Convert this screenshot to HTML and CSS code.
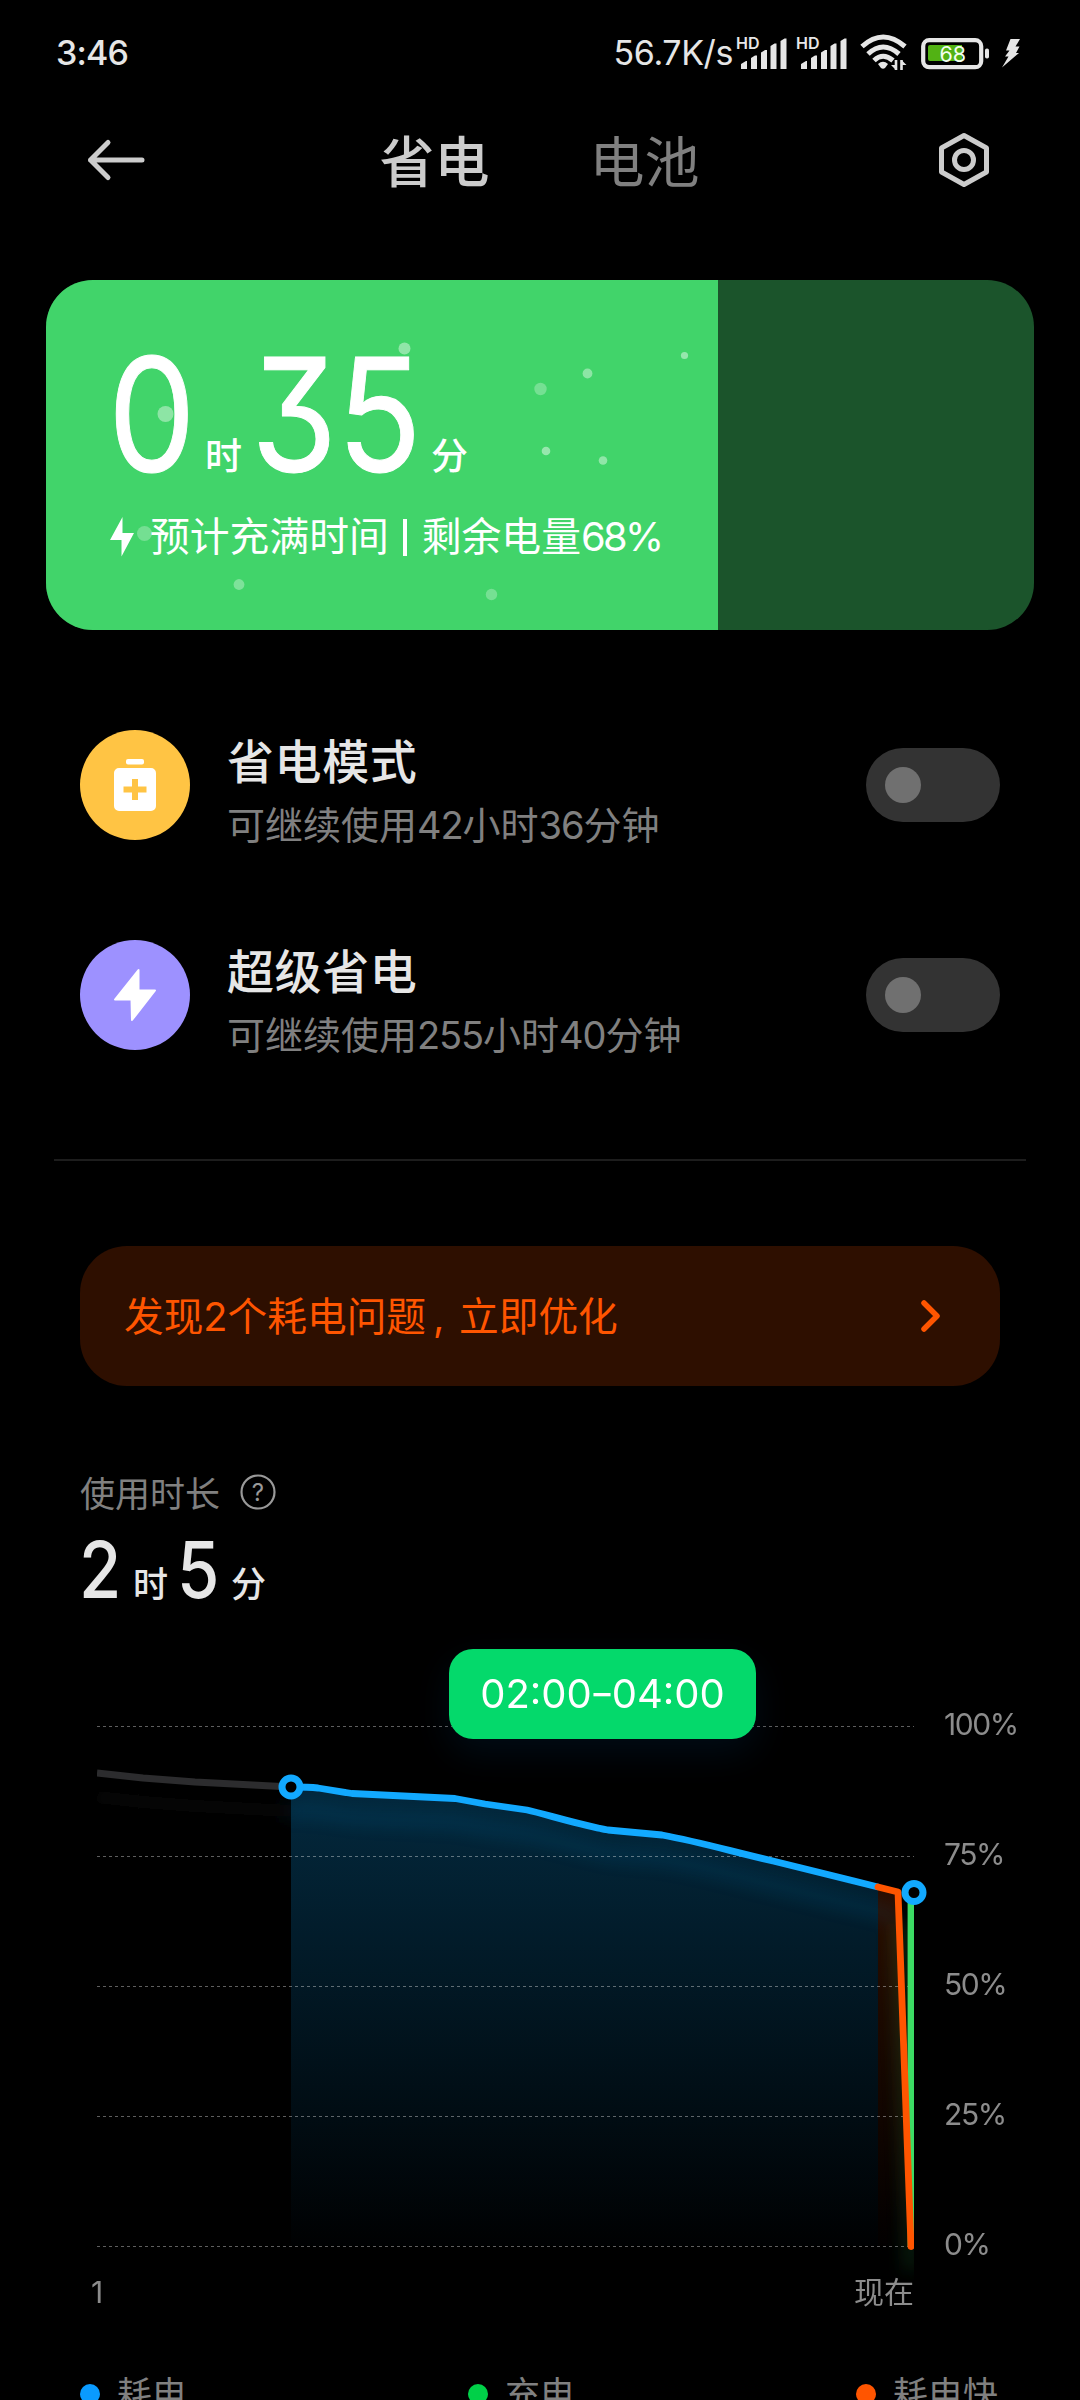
FILE: index.html
```html
<!DOCTYPE html>
<html lang="zh-CN">
<head>
<meta charset="utf-8">
<title>省电与电池</title>
<link rel="stylesheet" href="styles.css">
</head>
<body>
<div class="screen">
  <div class="status">
    <span class="clock">3:46</span>
    <div class="status-right">
      <span class="speed">56.7K/s</span>
      <svg class="signal" width="52" height="34" viewBox="0 0 52 34"><text class="hd" x="-1" y="13">HD</text><path d="M4 33v-5l5-3h1v8zM14 33V22l4-2.500h2V33zM24 33V16.500l4-2.500h2V33zM33.500 33v-23l4-2.500h2V33zM43.500 33V5l4-2.500h2V33z"/></svg>
      <svg class="signal" width="52" height="34" viewBox="0 0 52 34"><text class="hd" x="-1" y="13">HD</text><path d="M4 33v-5l5-3h1v8zM14 33V22l4-2.500h2V33zM24 33V16.500l4-2.500h2V33zM33.500 33v-23l4-2.500h2V33zM43.500 33V5l4-2.500h2V33z"/></svg>
      <svg class="wifi" width="48" height="38" viewBox="0 0 48 38"><g fill="none" stroke="#e6e6e6" stroke-width="5"><path d="M2 12.500Q23-6.500 45 12.500"/><path d="M8 20Q23 6 39 20"/><path d="M14 26.500Q23 18 33 26.500"/></g><path fill="#e6e6e6" d="M18 30q5-4.500 10 0l-3 4q-2 1.500-4 0z"/><path d="M36 26v10M41.500 26v10" stroke="#e6e6e6" stroke-width="2.600"/><path fill="#e6e6e6" d="M31 31h5v5zM46.500 31h-5v-5z"/></svg>
      <svg class="battery" width="70" height="32" viewBox="0 0 70 32"><rect x="2.200" y="3.200" width="58" height="27" rx="6" fill="none" stroke="#e6e6e6" stroke-width="4.200"/><path d="M9 8h32v16H9a2 2 0 0 1-2-2V10a2 2 0 0 1 2-2z" fill="#52b214"/><rect x="64" y="11.500" width="4" height="10" rx="1.800" fill="#e6e6e6"/><text x="18.500" y="24.500">68</text></svg>
      <svg class="charge" width="20" height="30" viewBox="0 0 20 30"><path fill="#e6e6e6" d="M8.500 1H18l-4.500 7.500h4l-3.500 6.500h3L0 29.500l6.500-11H3l4.500-6H4z"/></svg>
    </div>
  </div>

  <div class="header">
    <svg width="60" height="44" viewBox="0 0 60 44"><path d="M22 4.500L4.500 22 22 39.500M4.500 22H56" fill="none" stroke="#ccc" stroke-width="5" stroke-linecap="round" stroke-linejoin="round"/></svg>
    <div class="tabs"><span class="tab active">省电</span><span class="tab">电池</span></div>
    <svg width="52" height="56" viewBox="0 0 52 56"><path d="M26 3.500L48.500 16v24L26 52.500 3.500 40V16z" fill="none" stroke="#ccc" stroke-width="5" stroke-linejoin="round"/><circle cx="26" cy="28" r="9.500" fill="none" stroke="#ccc" stroke-width="5"/></svg>
  </div>

  <div class="card">
    <div class="level"></div>
    <svg class="bubbles" width="988" height="350" viewBox="46 280 988 350" fill="#fff">
      <circle cx="404.500" cy="348.500" r="6" opacity=".42"/><circle cx="165.500" cy="414" r="8" opacity=".4"/><circle cx="540.500" cy="389" r="6.200" opacity=".28"/><circle cx="587.500" cy="373.500" r="4.900" opacity=".4"/><circle cx="684.500" cy="355.500" r="3.600" opacity=".45"/><circle cx="546" cy="451" r="4.300" opacity=".45"/><circle cx="603" cy="460.500" r="4.300" opacity=".42"/><circle cx="144.500" cy="533.500" r="7.500" opacity=".27"/><circle cx="239" cy="584.500" r="5.400" opacity=".32"/><circle cx="491.500" cy="594.500" r="5.700" opacity=".28"/>
    </svg>
    <div class="big-time"><span class="num n1"><b>0</b></span><span class="unit">时</span><span class="num n2"><b>35</b></span><span class="unit">分</span></div>
    <div class="estimate">
      <svg width="24" height="40" viewBox="0 0 24 40"><path fill="#fff" d="M12.500 0v16H24L11.500 39.500V23H0z"/></svg>
      <span class="est-text">预计充满时间</span><i class="bar"></i><span class="est-text">剩余电量<span class="pct">68%</span></span>
    </div>
  </div>

  <div class="modes">
    <div class="mode">
      <div class="badge amber"><svg width="42" height="52" viewBox="0 0 42 52"><rect x="12" y="0" width="18" height="5.500" rx="2" fill="#fff"/><path fill="#fff" fill-rule="evenodd" d="M5 9h32a5 5 0 0 1 5 5v33a5 5 0 0 1-5 5H5a5 5 0 0 1-5-5V14a5 5 0 0 1 5-5zm13 11v7.500H9.500v6H18V41h6v-7.500h8.500v-6H24V20z"/></svg></div>
      <div class="mode-text"><div class="mode-title">省电模式</div><div class="mode-sub">可继续使用<span>42</span>小时<span>36</span>分钟</div></div>
      <div class="toggle"><div class="knob"></div></div>
    </div>
    <div class="mode">
      <div class="badge violet"><svg width="42" height="52" viewBox="0 0 42 52"><path fill="#fff" stroke="#fff" stroke-width="2" stroke-linejoin="round" d="M24.500 1v20.500H41L18 51l-.5-20.500H1z"/></svg></div>
      <div class="mode-text"><div class="mode-title">超级省电</div><div class="mode-sub">可继续使用<span>255</span>小时<span>40</span>分钟</div></div>
      <div class="toggle"><div class="knob"></div></div>
    </div>
  </div>

  <div class="divider"></div>

  <div class="alert">
    <span>发现2个耗电问题<span class="comma">,</span>立即优化</span>
    <svg width="22" height="34" viewBox="0 0 22 34"><path d="M4 4l13 13L4 30" fill="none" stroke="#ff5500" stroke-width="5.500" stroke-linecap="round" stroke-linejoin="round"/></svg>
  </div>

  <div class="usage-label"><span>使用时长</span><svg width="36" height="36" viewBox="0 0 36 36"><circle cx="18" cy="19" r="16.500" fill="none" stroke="#999" stroke-width="2.200"/><text x="18" y="27.500" text-anchor="middle">?</text></svg></div>
  <div class="usage"><span class="num u1"><b>2</b></span><span class="unit">时</span><span class="num u2"><b>5</b></span><span class="unit">分</span></div>

  <div class="chart">
    <svg width="1080" height="716" viewBox="0 1620 1080 716">
      <defs>
        <linearGradient id="blueFill" gradientUnits="userSpaceOnUse" x1="0" y1="1787" x2="0" y2="2246"><stop offset="0" stop-color="#03293e"/><stop offset="1" stop-color="#000102"/></linearGradient>
        <linearGradient id="orangeFill" gradientUnits="userSpaceOnUse" x1="0" y1="1887" x2="0" y2="2246"><stop offset="0" stop-color="#2b0e00"/><stop offset="1" stop-color="#020000"/></linearGradient>
        <filter id="glow" filterUnits="userSpaceOnUse" x="40" y="1740" width="920" height="580"><feGaussianBlur stdDeviation="8"/></filter>
        <clipPath id="plot"><rect x="97" y="1700" width="817" height="620"/></clipPath>
      </defs>
      <path d="M291 1787l27 1 34 5.500 103 5 30 5.500 42 6 13 3 40 10 28 7 54 5 48 10 63 16 105 26V2246H291z" fill="url(#blueFill)"/>
      <path d="M878 1887l20 5 13 354H878z" fill="url(#orangeFill)"/>
      <g clip-path="url(#plot)"><g filter="url(#glow)" fill="none" stroke-width="14" transform="translate(0 24)">
        <path d="M97 1773l46 5 52 4 96 5" stroke="#2c2c2e" opacity=".15"/>
        <path d="M291 1787l27 1 34 5.500 103 5 30 5.500 42 6 13 3 40 10 28 7 54 5 48 10 63 16 125 31" stroke="#12a9ff" opacity=".09"/>
        <path d="M898 1900l13 346V1900" stroke="#3cdc64" opacity=".13"/>
      </g></g>
      <g stroke="#fff" stroke-opacity=".37" stroke-width="1" stroke-dasharray="3 3"><path d="M97 1726.500h817M97 1856.500h817M97 1986.500h817M97 2116.500h817M97 2246.500h817"/></g>
      <g clip-path="url(#plot)" fill="none" stroke-width="6.800" stroke-linejoin="round">
        <path d="M97 1773l46 5 52 4 96 5" stroke="#2c2c2e"/>
        <path d="M291 1787C300 1787 309 1787 318 1788L352 1793.500 455 1798.500 485 1804 527 1810C545 1814 580 1825 608 1830L662 1835C700 1842 730 1851 773 1861L878 1887" stroke="#12a9ff"/>
        <path d="M911 1892V2246" stroke="#3cdc64"/>
        <path d="M878 1887l20 5 13 354.500" stroke="#ff5500" stroke-linecap="round"/>
      </g>
      <g fill="#000" stroke="#12a9ff" stroke-width="7"><circle cx="291" cy="1787" r="9"/><circle cx="914" cy="1892.500" r="9"/></g>
      <g class="axis"><text x="944" y="1735">100%</text><text x="944" y="1865">75%</text><text x="944" y="1995">50%</text><text x="944" y="2125">25%</text><text x="944" y="2255">0%</text><text x="91" y="2303">1</text><text class="cjk" x="914" y="2302.500" text-anchor="end">现在</text></g>
    </svg>
    <div class="tip">02:00<span class="dash">–</span>04:00</div>
  </div>

  <div class="legend">
    <div class="key"><i class="dot blue"></i>耗电</div>
    <div class="key"><i class="dot green"></i>充电</div>
    <div class="key"><i class="dot orange"></i>耗电快</div>
  </div>
</div>
</body>
</html>
```
FILE: styles.css
```css
* { box-sizing: border-box; }
body { margin: 0; background: #000; }
svg { display: block; flex: none; overflow: visible; }
.screen {
  width: 1080px; height: 2400px; overflow: hidden; background: #000; color: #e6e6e6;
  font-family: Inter, "Noto Sans CJK SC", sans-serif; white-space: nowrap;
}

.status { height: 106px; padding: 0 58px 0 56px; display: flex; align-items: center; justify-content: space-between; font-size: 34px; font-weight: 500; line-height: 40px; }
.clock { letter-spacing: -0.8px; }
.status-right { display: flex; align-items: center; }
.speed { margin-right: 4px; font-weight: 400; letter-spacing: -0.4px; }
.signal { margin-right: 8px; fill: #e6e6e6; }
.hd { font-size: 16px; font-weight: 600; }
.wifi { margin-left: 3px; margin-right: 13px; }
.battery { margin-right: 11px; }
.battery text { font-size: 21.5px; font-weight: 400; fill: #f2fff0; }

.header { height: 108px; padding: 0 90px 0 86px; display: flex; align-items: center; justify-content: space-between; }
.tabs { display: flex; gap: 100px; margin-right: 5px; padding-top: 3px; font-size: 55px; line-height: 80px; }
.tab { color: #808080; }
.tab.active { color: #ccc; font-weight: 500; }

.card { position: relative; width: 988px; height: 350px; margin: 66px 46px 0; padding: 64px 0 0 64px; border-radius: 47px; overflow: hidden; background: #1b542b; color: #fff; }
.level { position: absolute; left: 0; top: 0; width: 68%; height: 100%; background: #41d46a; }
.bubbles { position: absolute; left: 0; top: 0; }
.big-time, .estimate { position: relative; display: flex; }
.big-time { height: 148px; align-items: flex-end; }
.num { line-height: 1; }
.num b { display: inline-block; font-weight: 400; transform-origin: 0 50%; font-feature-settings: "cv09"; }
.big-time .num { font-size: 157px; height: 156px; }
.big-time b { transform: scaleX(.885); -webkit-text-stroke: 1px #fff; }
.n1 { width: 97px; margin-left: -2px; }
.n2 { width: 180px; margin-left: -3px; }
.big-time .unit { font-size: 37px; line-height: 44px; font-weight: 500; padding-bottom: 13px; }
.big-time .unit:nth-child(2) { width: 49px; }
.estimate { height: 56px; margin-top: 17px; align-items: center; font-size: 39.8px; line-height: 56px; }
.estimate svg { margin-right: 16px; }
.bar { width: 4px; height: 37px; margin: 0 15px 0 14px; background: #fff; }
.pct { letter-spacing: -2.6px; }

.modes { padding: 99px 80px 0; display: flex; flex-direction: column; gap: 100px; margin-top: 1px; }
.mode { height: 110px; display: flex; align-items: center; }
.badge { width: 110px; height: 110px; border-radius: 50%; display: flex; align-items: center; justify-content: center; }
.amber { background: #ffc444; }
.violet { background: #9d91ff; }
.mode-text { flex: 1; padding: 14px 0 0 37px; }
.mode-title { font-size: 47px; line-height: 66px; font-weight: 500; letter-spacing: 0.6px; }
.mode-sub { font-size: 38px; line-height: 60px; color: #808080; }
.mode-sub span { letter-spacing: -1.1px; }
.toggle { width: 134px; height: 74px; border-radius: 37px; padding: 19px; background: #333; }
.knob { width: 36px; height: 36px; border-radius: 50%; background: #707070; }

.divider { height: 2px; margin: 109px 54px 0; background: #1d1d1d; }
.alert { height: 140px; margin: 85px 80px 0; padding: 0 58px 0 44px; border-radius: 47px; background: #2e0f00; color: #ff5500; display: flex; align-items: center; justify-content: space-between; font-size: 39.7px; line-height: 56px; }
.alert > span { padding-top: 2px; }
.comma { display: inline-block; width: 33px; padding-left: 7px; }

.usage-label { height: 50px; margin-top: 80px; padding-left: 80px; display: flex; align-items: center; gap: 20px; font-size: 35px; color: #808080; }
.usage-label text { font-size: 24px; fill: #999; }
.usage { height: 78px; padding-left: 79px; margin-top: 16px; display: flex; align-items: flex-start; }
.usage .num { font-size: 78px; line-height: 76px; }
.usage b { transform: scaleX(.88); font-weight: 500; }
.u1 { width: 54px; }
.u2 { width: 54px; margin-left: -2px; }
.usage .unit { font-size: 35px; line-height: 40px; font-weight: 500; padding-top: 32px; }
.usage .unit:nth-child(2) { width: 46px; }

.chart { position: relative; height: 716px; margin-top: 10px; }
.axis { font-size: 30px; fill: #8c8c8c; letter-spacing: -1.4px; }
.axis .cjk { letter-spacing: 0; }
.tip { position: absolute; left: 449px; top: 29px; width: 307px; height: 90px; border-radius: 24px; background: #04d96b; color: #fff; font-size: 40px; line-height: 90px; text-align: center; box-shadow: 0 14px 36px rgba(0, 60, 110, .2); }
.dash { display: inline-block; line-height: 1; transform: translateY(-1px) scaleX(.85); }

.legend { height: 64px; padding: 0 80px; display: flex; margin-top: 26px; font-size: 35px; line-height: 64px; color: #808080; }
.key { width: 388px; display: flex; flex: none; align-items: center; }
.dot { width: 20px; height: 20px; border-radius: 50%; margin-right: 17px; }
.blue { background: #0a9bff; }
.green { background: #00d048; }
.orange { background: #ff5500; }
```
